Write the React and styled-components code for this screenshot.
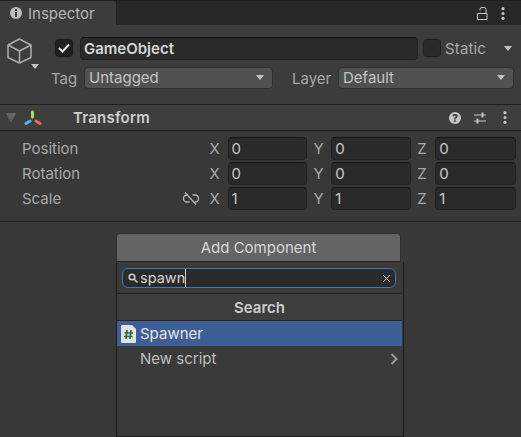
import React from "react";
import styled, { createGlobalStyle } from "styled-components";

const Global = createGlobalStyle`
  html, body { margin: 0; padding: 0; background: #383838; }
  body { font-family: Inter, "Liberation Sans", sans-serif; font-size: 15px; color: #c4c4c4; }
  * { box-sizing: border-box; }
`;
const Page = styled.div`width: 521px; height: 437px; overflow: hidden; display: flex; flex-direction: column; background: #383838;`;
const TabBar = styled.div`height: 25px; flex: none; background: #282828; border-top: 1px solid #1f1f1f; display: flex; align-items: stretch; justify-content: space-between; padding-right: 16px;`;
const Tab = styled.div`width: 117px; background: #3c3c3c; display: flex; align-items: center; gap: 6px; padding-left: 10px; color: #b4b4b4; font-size: 15px; border-right: 1px solid #232323; border-radius: 0 3px 0 0;`;
const IconRow = styled.div`display: flex; align-items: center; gap: ${p => p.$gap || 10}px;`;
const Head = styled.div`height: 80px; flex: none; background: #3c3c3c; border-bottom: 1px solid #1f1f1f; padding: 11px 7px 0 6px; display: flex;`;
const CubeCol = styled.div`width: 37px; flex: none; position: relative; padding: 2px 0 0 1px;`;
const Caret = styled.div`width: 0; height: 0; border-left: 4.5px solid transparent; border-right: 4.5px solid transparent; border-top: 5px solid ${p => p.$c || "#c2c2c2"}; flex: none;`;
const CubeCaret = styled(Caret)`position: absolute; left: 25px; top: 28px;`;
const HeadBody = styled.div`flex: 1; display: flex; flex-direction: column; gap: 6px;`;
const Line = styled.div`display: flex; align-items: center; height: 24px;`;
const Check = styled.div`width: 18px; height: 18px; margin-left: ${p => p.$ml ?? 12}px; border-radius: 3px; background: ${p => p.$on ? "#202020" : "#2a2a2a"}; border: 1px solid ${p => p.$on ? "#1a1a1a" : "#212121"}; display: flex; align-items: center; justify-content: center; flex: none;`;
const NameField = styled.div`width: 338px; height: 23px; margin-left: 7px; background: #2a2a2a; border: 1px solid #212121; border-top-color: #0e0e0e; border-radius: 4px; color: #d6d6d6; font-weight: 600; font-size: 15px; padding-left: 3px; line-height: 22px; flex: none;`;
const Static = styled.div`margin-left: 5px; display:flex; align-items:center; flex: 1; color: #a8a8a8; padding-right: 2px;`;
const StaticText = styled.span`margin-left: 4px; flex: 1; letter-spacing: 0.15px;`;
const Label = styled.div`color: #a8a8a8; font-size: 15px; flex: none; width: ${p => p.$w}px; margin-left: ${p => p.$ml}px;`;
const Select = styled.div`width: ${p => p.$w}px; height: 22px; background: #515151; border: 1px solid #303030; border-radius: 4px; display: flex; align-items: center; justify-content: space-between; padding: 0 8px 2px 4px; color: #c4c4c4; font-size: 15px; flex: none;`;
const Header = styled.div`height: 26px; flex: none; background: #3e3e3e; border-bottom: 1px solid #1f1f1f; display: flex; align-items: center; padding: 0 14px 0 6px;`;
const GizmoWrap = styled.div`margin-left: 8px; display: flex;`;
const Title = styled.div`margin-left: 31px; flex: 1; font-weight: 600; color: #cfcfcf; font-size: 15px; letter-spacing: 0.2px;`;
const Fold = styled.div`width: 0; height: 0; border-left: 5.5px solid transparent; border-right: 5.5px solid transparent; border-top: 10px solid #636363;`;
const DotsGap = styled.div`margin-left: 4px; display: flex;`;
const Body = styled.div`height: 91px; flex: none; border-bottom: 1px solid #1f1f1f; padding: 6px 5px 0 22px; display: flex; flex-direction: column; gap: 2px;`;
const Row = styled.div`height: 23px; display: flex; align-items: center;`;
const RowLabel = styled.div`width: 188px; color: #a8a8a8; font-size: 15px; display: flex; align-items: center; justify-content: space-between; padding-right: 11px;`;
const Axis = styled.div`width: 18px; color: #a8a8a8; font-size: 15px;`;
const Num = styled.div`width: 80px; height: 23px; background: #2a2a2a; border: 1px solid #212121; border-top-color: #151515; border-radius: 4px; padding-left: 3px; color: #c8c8c8; margin-right: 6px; line-height: 22px; &:last-child { margin-right: 0; width: 81px; }`;
const Lower = styled.div`flex: 1; display: flex; flex-direction: column; align-items: flex-start; padding: 11px 0 0 116px;`;
const AddButton = styled.div`width: 285px; height: 29px; background: #646464; border: 1px solid #303030; border-bottom-color: #242424; border-radius: 4px 4px 0 0; display: flex; align-items: center; justify-content: center; color: #d8d8d8; font-size: 15px;`;
const Popup = styled.div`width: 288px; flex: 1; background: #3a3a3a; border: 1px solid #1c1c1c; border-top: none; display: flex; flex-direction: column; padding-top: 6px;`;
const SearchBox = styled.div`height: 20px; margin: 0 7px 0 5px; background: #2a2a2a; border: 1px solid #3a79bb; border-radius: 6px; display: flex; align-items: center; padding: 0 4px 0 5px; gap: 2px; color: #d4d4d4; font-size: 14.5px;`;
const Caretbar = styled.span`display: inline-block; width: 1px; height: 18px; background: #d0d0d0; vertical-align: -4px;`;
const SearchText = styled.div`flex: 1; line-height: 18px;`;
const Section = styled.div`margin-top: 5px; height: 28px; background: #3e3e3e; border-top: 1px solid #232323; border-bottom: 1px solid #232323; margin-right: 1px; display: flex; align-items: center; justify-content: center; font-weight: 600; font-size: 15px; color: #cdcdcd;`;
const Item = styled.div`height: 25px; margin-right: 1px; display: flex; align-items: center; padding-left: ${p => p.$pad}px; gap: 4px; background: ${p => p.$sel ? "#3e5f96" : "transparent"}; color: ${p => p.$sel ? "#e4e4e4" : "#bdbdbd"}; font-size: 15px; justify-content: ${p => p.$between ? "space-between" : "flex-start"}; padding-right: 4px;`;

const Info = () => <svg width="12" height="12" viewBox="0 0 12 12"><circle cx="6" cy="6" r="6" fill="#bdbdbd"/><rect x="5" y="2" width="2" height="2" fill="#3c3c3c"/><rect x="5" y="5" width="2" height="5" fill="#3c3c3c"/></svg>;
const Lock = () => <svg width="11" height="13" viewBox="0 0 11 13" fill="none" stroke="#c4c4c4" strokeWidth="1"><path d="M0.5 6.5H10V12.5H0.5Z"/><path d="M3 3.5V2.5Q3 .5 5 .5H7Q9 .5 9 2.5V6.5"/></svg>;
const Dots = () => <svg width="4" height="13" viewBox="0 0 4 13" fill="#c4c4c4"><circle cx="2" cy="1.7" r="1.6"/><circle cx="2" cy="6.5" r="1.6"/><circle cx="2" cy="11.3" r="1.6"/></svg>;
const Cube = () => <svg width="25" height="26" viewBox="0 0 25 26" fill="none" stroke="#adadad" strokeWidth="1.5" strokeLinejoin="round"><path d="M12.5 1 24 7V19.5L12.5 25 1 19.5V7Z"/><path d="M1 7 12.5 13 24 7M12.5 13V25"/></svg>;
const Tick = () => <svg width="12" height="10" viewBox="0 0 12 10" fill="none" stroke="#e2e2e2" strokeWidth="2"><path d="M1 5l3.5 3.5L11 1.5"/></svg>;
const Gizmo = () => <svg width="18" height="16" viewBox="0 0 18 16" fill="none" strokeWidth="3" strokeLinecap="round"><path d="M8.5 2V7" stroke="#a4e34b"/><path d="M2 13.5 6 11" stroke="#4fb5ea"/><path d="M12 11 16 13.5" stroke="#ef6a3f"/></svg>;
const Help = () => <svg width="12" height="12" viewBox="0 0 12 12"><circle cx="6" cy="6" r="6" fill="#c4c4c4"/><text x="6" y="10" textAnchor="middle" fontSize="10.5" fontWeight="800" fontFamily="Inter" fill="#3e3e3e">?</text></svg>;
const Sliders = () => <svg width="12" height="12" viewBox="0 0 12 12" stroke="#c4c4c4" strokeWidth="1.2" fill="none"><path d="M0 3H12M0 9H12"/><path d="M8.5 0.5V5.5M3.5 6.5V11.5" strokeWidth="2"/></svg>;
const Unlink = () => <svg width="16" height="13" viewBox="0 0 16 13" fill="none" stroke="#b8b8b8" strokeWidth="1.3"><path d="M4.5 3H4a3.5 3.5 0 0 0 0 7h2.5M9.5 3H12a3.5 3.5 0 0 1 0 7h-.5"/><path d="M2 .5l11 12"/></svg>;
const Glass = () => <svg width="10" height="10" viewBox="0 0 10 10" fill="none" stroke="#d0d0d0" strokeWidth="1.5"><circle cx="4" cy="4" r="2.8"/><path d="M6 6l3.5 3.5"/></svg>;
const Close = () => <svg width="9" height="9" viewBox="0 0 9 9" stroke="#cfcfcf" strokeWidth="1"><path d="M1 1l7 7M8 1l-7 7"/></svg>;
const Script = () => <svg width="15" height="18" viewBox="0 0 15 18"><path d="M1 0H11L15 4V17a1 1 0 0 1-1 1H1a1 1 0 0 1-1-1V1a1 1 0 0 1 1-1Z" fill="#e2e2e2"/><path d="M6 5 5 14M10 5 9 14M3.5 8H12M3 11.5H11.5" stroke="#2f6a3d" strokeWidth="1.7"/></svg>;
const Chevron = () => <svg width="8" height="12" viewBox="0 0 8 12" fill="none" stroke="#9a9a9a" strokeWidth="2"><path d="M1.5 1 6.5 6 1.5 11"/></svg>;

const rows = [
  { label: "Position", v: "0" },
  { label: "Rotation", v: "0" },
  { label: "Scale", v: "1", link: true },
];

export default function App() {
  return (
    <Page>
      <Global />
      <TabBar>
        <Tab><Info />Inspector</Tab>
        <IconRow $gap={13}><Lock /><Dots /></IconRow>
      </TabBar>
      <Head>
        <CubeCol><Cube /><CubeCaret /></CubeCol>
        <HeadBody>
          <Line>
            <Check $on><Tick /></Check>
            <NameField>GameObject</NameField>
            <Static>
              <Check $ml={0} />
              <StaticText>Static</StaticText>
              <Caret />
            </Static>
          </Line>
          <Line>
            <Label $w={33} $ml={8}>Tag</Label>
            <Select $w={189}>Untagged<Caret /></Select>
            <Label $w={46} $ml={19}>Layer</Label>
            <Select $w={176}>Default<Caret /></Select>
          </Line>
        </HeadBody>
      </Head>
      <Header>
        <Fold />
        <GizmoWrap><Gizmo /></GizmoWrap>
        <Title>Transform</Title>
        <IconRow $gap={13}><Help /><Sliders /><DotsGap><Dots /></DotsGap></IconRow>
      </Header>
      <Body>
        {rows.map(r => (
          <Row key={r.label}>
            <RowLabel>{r.label}{r.link && <Unlink />}</RowLabel>
            <Axis>X</Axis><Num>{r.v}</Num>
            <Axis>Y</Axis><Num>{r.v}</Num>
            <Axis>Z</Axis><Num>{r.v}</Num>
          </Row>
        ))}
      </Body>
      <Lower>
        <AddButton>Add Component</AddButton>
        <Popup>
          <SearchBox>
            <Glass />
            <SearchText>spawn<Caretbar /></SearchText>
            <Close />
          </SearchBox>
          <Section>Search</Section>
          <Item $sel $pad={4}><Script />Spawner</Item>
          <Item $pad={23} $between>New script<Chevron /></Item>
        </Popup>
      </Lower>
    </Page>
  );
}
